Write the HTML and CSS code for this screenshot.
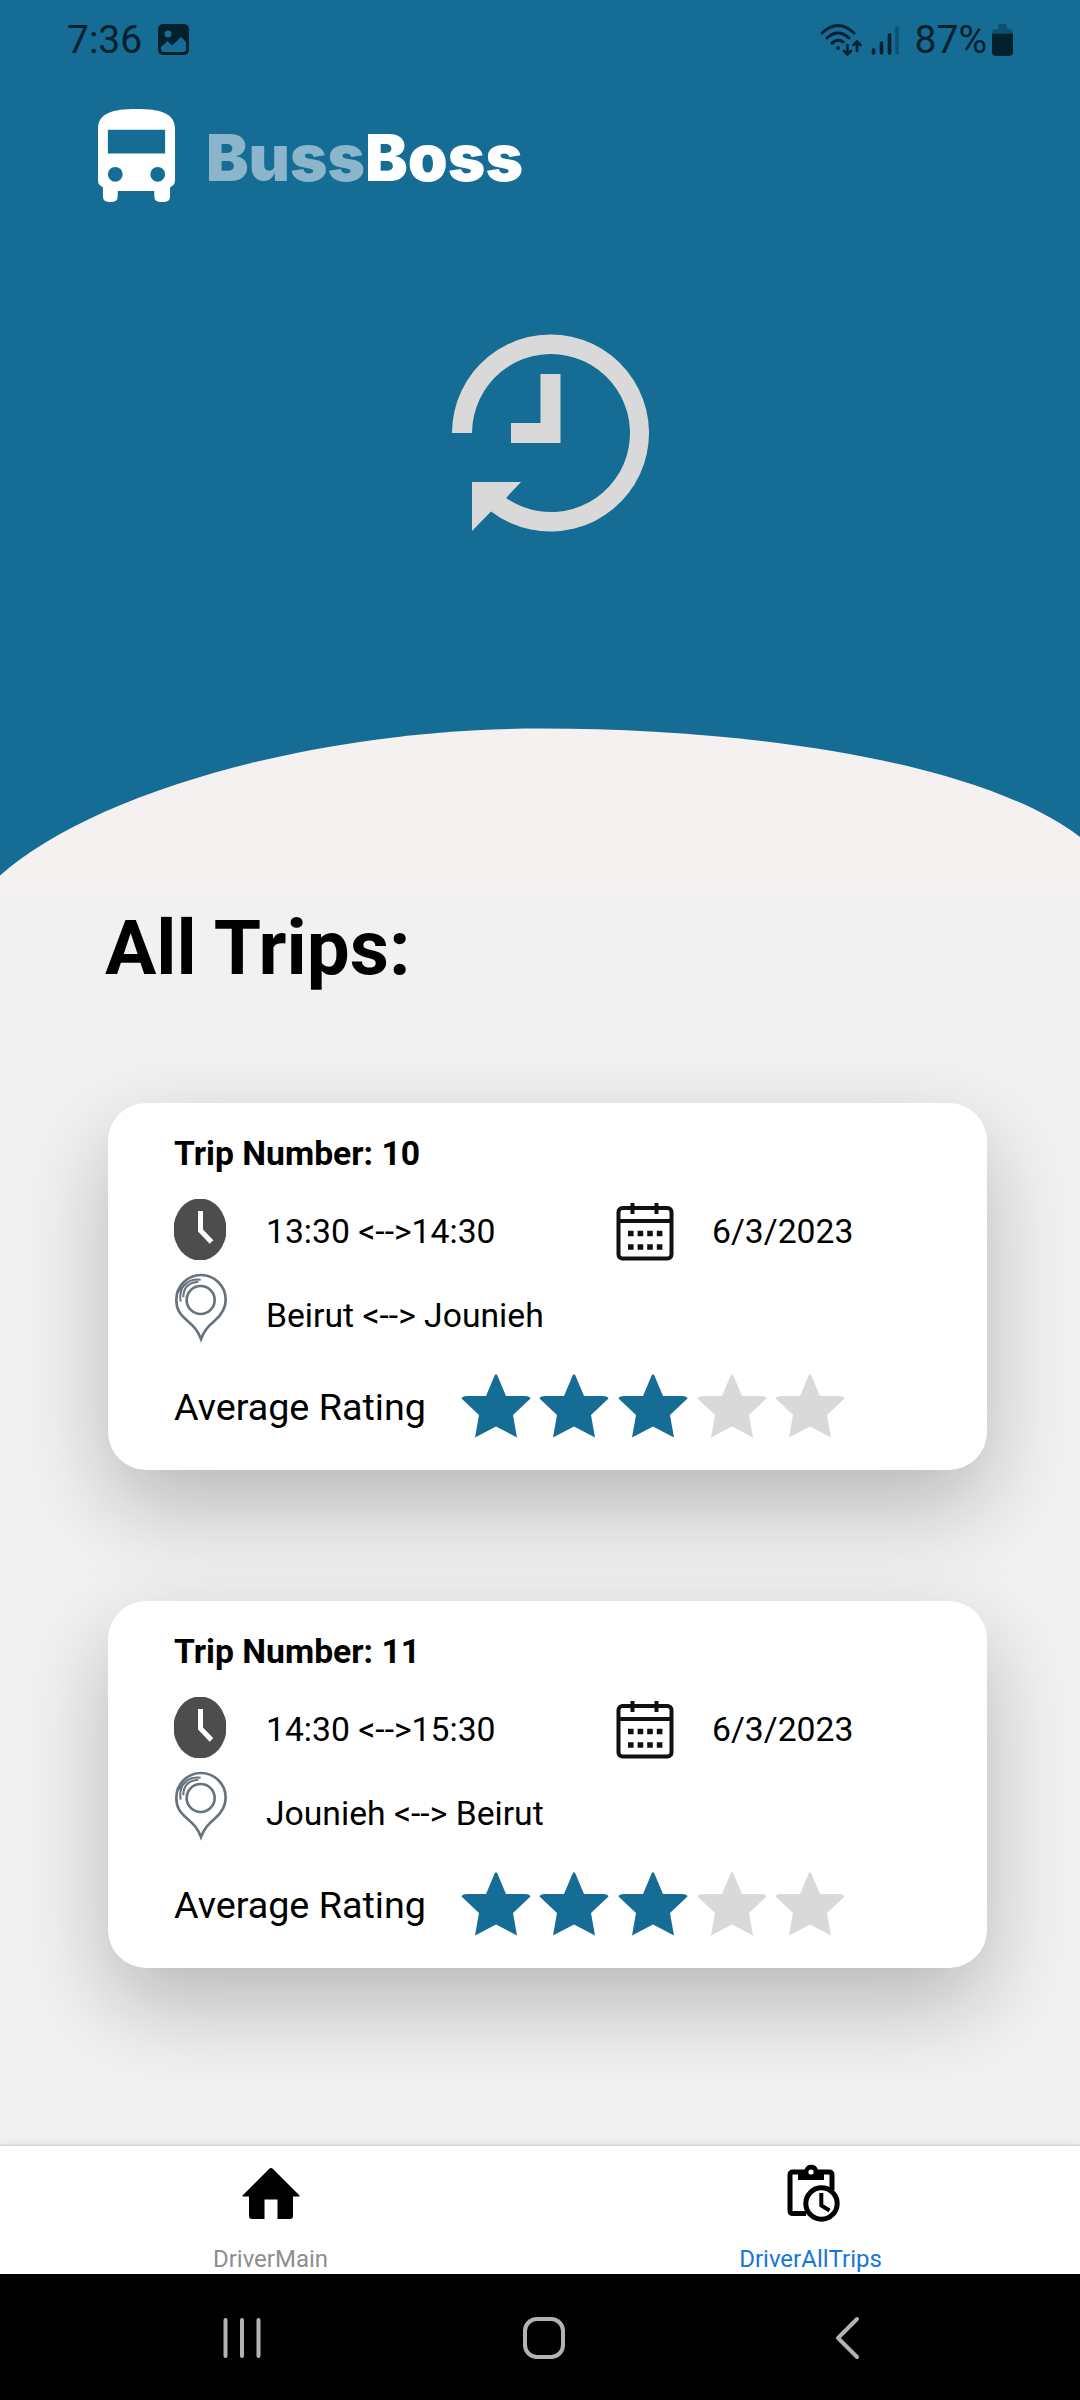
FILE: index.html
```html
<!DOCTYPE html>
<html lang="en">
<head>
<meta charset="utf-8">
<title>BussBoss</title>
<link rel="stylesheet" href="styles.css">
</head>
<body>
<svg class="defs" width="0" height="0">
  <symbol id="clock" viewBox="0 0 52 61">
    <ellipse cx="26" cy="30.500" rx="26.500" ry="31" fill="#4d4d4d"/>
    <path d="M26.500 12V31.500L37.500 43" fill="none" stroke="#fff" stroke-width="5"/>
  </symbol>
  <symbol id="pin" viewBox="246 576 168 216">
    <g fill="none" stroke="#66727e" stroke-width="8">
      <path d="M333 780C323 754 312 742 292 725C268 704 259 690 259 662A74 74 0 0 1 407 662C407 688 396 706 374 725C354 742 343 754 333 780Z"/>
      <circle cx="332" cy="663" r="42"/>
      <path stroke-width="6" d="M272 668C265 625 290 598 332 602M280 655C280 625 296 610 325 608M262 640L290 612"/>
    </g>
  </symbol>
  <symbol id="calendar" viewBox="0 0 60 62">
    <g fill="none" stroke="#111" stroke-width="4">
      <rect x="4.500" y="9" width="53" height="50.500" rx="4"/>
      <path d="M4 22H58M18.500 4V15M42.500 4V15"/>
    </g>
    <path d="M14 34.500H50M14 48H50" stroke="#111" stroke-width="5.600" stroke-dasharray="5.600 4" fill="none"/>
  </symbol>
  <symbol id="star" viewBox="0 0 70 64">
    <path d="M35 0Q36.500 1 37 3L45 22H64Q69 22 69.500 24.500L52 41L56 63.500L35 52.500L14 63.500L18 41L.5 24.500Q1 22 6 22H25L33 3Q33.500 1 35 0Z"/>
  </symbol>
</svg>

<header class="hero">
  <div class="status">
    <div class="status-side">
      <span>7:36</span>
      <svg class="photo" width="32" height="32" viewBox="0 0 32 32">
        <rect width="31" height="31" rx="5" fill="#05202d"/>
        <circle cx="10" cy="10" r="3.500" fill="#156c95"/>
        <path d="M3 23L9.500 17L14 21.500L23 13L28 18V25Q28 28 25 28H6Q3 28 3 25Z" fill="#156c95"/>
      </svg>
    </div>
    <div class="status-side">
      <svg width="42" height="34" viewBox="0 0 42 34" fill="none" stroke="#05202d" stroke-width="3" stroke-linecap="round">
        <path d="M2 10Q18 -5 34 10M7 15Q18 5 29 15M12 20Q18 15 23 19"/>
        <path stroke-width="2.600" d="M27.500 22V31M24 28L27.500 31.500L31 28M37 28V19M33.500 22L37 18.500L40.500 22"/>
        <circle cx="18" cy="25" r="2" fill="#05202d" stroke="none"/>
      </svg>
      <svg class="signal" width="29" height="31" viewBox="0 0 29 31" fill="none" stroke="#05202d" stroke-width="3.600" stroke-linecap="round">
        <path d="M2.500 25V28M10.500 18V28M18.500 10V28"/>
        <path d="M26 3V28" opacity=".35"/>
      </svg>
      <span class="percent">87%</span>
      <svg width="22" height="34" viewBox="0 0 22 34" fill="#05202d">
        <path d="M6 6V3Q6 1 8 1H13Q15 1 15 3V6H17Q21 6 21 10H0Q0 6 4 6Z" opacity=".35"/>
        <path d="M0 10.500H21V29Q21 33 17 33H4Q0 33 0 29Z"/>
      </svg>
    </div>
  </div>
  <div class="brand">
    <svg width="77" height="93" viewBox="0 0 78 94" preserveAspectRatio="none">
      <path fill="#fff" fill-rule="evenodd" d="M0 20C0 4 15 0 39 0S78 4 78 20V72Q78 77 73 79V88Q73 94 67 94H63Q57 94 57 88V83H20V88Q20 94 14 94H11Q5 94 5 88V79Q0 77 0 72ZM10 21V45H68V21ZM17.500 58.500A7.500 7.500 0 1 0 17.500 73.500A7.500 7.500 0 1 0 17.500 58.500ZM60.500 58.500A7.500 7.500 0 1 0 60.500 73.500A7.500 7.500 0 1 0 60.500 58.500Z"/>
    </svg>
    <svg class="wordmark" width="330" height="96" viewBox="0 0 330 96">
      <text x="0" y="72" textLength="159" lengthAdjust="spacingAndGlyphs" fill="#8ab5ca">Buss</text>
      <text x="159" y="72" textLength="158" lengthAdjust="spacingAndGlyphs" fill="#fff">Boss</text>
    </svg>
  </div>
  <svg class="history" width="200" height="200" viewBox="0 0 200 200">
    <path fill="#d9d9d9" d="M1 99A98.500 98.500 0 1 1 40 177.500L21 197V148H70L55 164A79 79 0 1 0 21 99ZM89.500 40H109.500V109H60V89H89.500Z"/>
  </svg>
  <svg class="curve" width="1080" height="164" viewBox="0 728 1080 164">
    <path fill="#f5f1f0" d="M0 875.500C90 795 310 728.500 541 728.500C760 728.500 985 764 1080 837V892H0Z"/>
  </svg>
</header>

<main class="content">
  <h1>All Trips:</h1>
  <section class="card">
    <h2>Trip Number: 10</h2>
    <div class="when">
      <svg class="clock"><use href="#clock"/></svg>
      <span class="hours">13:30 &lt;--&gt;14:30</span>
      <svg class="calendar"><use href="#calendar"/></svg>
      <span>6/3/2023</span>
    </div>
    <div class="route">
      <svg class="pin"><use href="#pin"/></svg>
      <span>Beirut &lt;--&gt; Jounieh</span>
    </div>
    <div class="rating">
      <span class="rating-label">Average Rating</span>
      <svg class="star on"><use href="#star"/></svg>
      <svg class="star on"><use href="#star"/></svg>
      <svg class="star on"><use href="#star"/></svg>
      <svg class="star"><use href="#star"/></svg>
      <svg class="star"><use href="#star"/></svg>
    </div>
  </section>
  <section class="card">
    <h2>Trip Number: 11</h2>
    <div class="when">
      <svg class="clock"><use href="#clock"/></svg>
      <span class="hours">14:30 &lt;--&gt;15:30</span>
      <svg class="calendar"><use href="#calendar"/></svg>
      <span>6/3/2023</span>
    </div>
    <div class="route">
      <svg class="pin"><use href="#pin"/></svg>
      <span>Jounieh &lt;--&gt; Beirut</span>
    </div>
    <div class="rating">
      <span class="rating-label">Average Rating</span>
      <svg class="star on"><use href="#star"/></svg>
      <svg class="star on"><use href="#star"/></svg>
      <svg class="star on"><use href="#star"/></svg>
      <svg class="star"><use href="#star"/></svg>
      <svg class="star"><use href="#star"/></svg>
    </div>
  </section>
</main>

<nav class="tabs">
  <a class="tab">
    <svg width="60" height="62" viewBox="0 0 60 62">
      <path d="M28 7Q30 5 32 7L58.500 33.500V34.500H52V54Q52 57 49 57H36.500V37.500H23.500V57H11Q8 57 8 54V34.500H1.500V33.500Z"/>
    </svg>
    <span>DriverMain</span>
  </a>
  <a class="tab active">
    <svg width="60" height="62" viewBox="0 0 60 62" fill="none" stroke="#000" stroke-width="5">
      <path d="M25 51.500H12Q9 51.500 9 48.500V13Q9 10 12 10H48Q51 10 51 13V28"/>
      <path d="M17 8H23.500A7 7 0 0 1 37 8H43V18H17Z" fill="#000" stroke="none"/>
      <circle cx="30" cy="10" r="2.600" fill="#fff" stroke="none"/>
      <circle cx="40.500" cy="41.500" r="15.700" fill="#fff"/>
      <path stroke-width="4" d="M40.300 31V43.500L48.500 48.500"/>
    </svg>
    <span>DriverAllTrips</span>
  </a>
</nav>

<footer class="system">
  <svg width="40" height="46" viewBox="0 0 40 46"><path d="M3.500 5V41M20 5V41M36.500 5V41"/></svg>
  <svg class="home" width="46" height="46" viewBox="0 0 46 46"><rect x="4" y="4" width="38" height="38" rx="12"/></svg>
  <svg width="26" height="46" viewBox="0 0 26 46"><path d="M23 4L4 23L23 42"/></svg>
</footer>
</body>
</html>
```
FILE: styles.css
```css
* { box-sizing: border-box; }
body {
  margin: 0;
  width: 1080px;
  height: 2400px;
  display: flex;
  flex-direction: column;
  overflow: hidden;
  background: #f1f1f1;
  color: #000;
  font-family: Roboto, sans-serif;
}
svg { display: block; flex: none; }
.defs { position: absolute; }

.hero {
  height: 892px;
  flex: none;
  display: flex;
  flex-direction: column;
  background: #156c95;
}
.status {
  height: 80px;
  padding: 0 66px 0 67px;
  display: flex;
  justify-content: space-between;
  color: #05202d;
  font-size: 39px;
  line-height: 80px;
}
.status-side { display: flex; align-items: center; }
.photo { margin-left: 16px; }
.signal { margin-left: 9px; }
.percent { margin: 0 5px 0 15px; }

.brand {
  height: 94px;
  margin-top: 29px;
  padding-left: 98px;
  display: flex;
}
.wordmark {
  margin-left: 31px;
  font-family: Inter, sans-serif;
  font-size: 65px;
  font-weight: 900;
}
.history { margin: 131px 0 0 450.5px; }
.curve { margin-top: auto; }

.content {
  height: 1254px;
  flex: none;
  overflow: hidden;
}
h1 {
  margin: 11px 0 110px 105px;
  font-size: 76.4px;
  line-height: 90px;
  font-weight: 700;
}
.card {
  width: 879px;
  height: 367px;
  margin: 0 0 131px 108px;
  padding: 31px 66px 0;
  border-radius: 38px;
  background: #fff;
  box-shadow: 0 36px 88px rgba(0, 0, 0, .24);
  font-size: 33.7px;
}
h2 { margin: 0; font-size: 33.7px; line-height: 40px; }
.when {
  height: 62px;
  margin-top: 25px;
  display: flex;
  align-items: flex-start;
  line-height: 65px;
}
.clock { width: 52px; height: 61px; margin-right: 40px; }
.hours { width: 348px; }
.calendar { width: 60px; height: 62px; margin-right: 38px; }
.route {
  height: 68px;
  margin-top: 13px;
  display: flex;
  align-items: flex-start;
}
.pin { width: 56px; height: 72px; margin: -3px 38px 0 -2px; }
.route span { padding-top: 22px; line-height: 40px; }
.rating {
  height: 64px;
  margin-top: 32px;
  display: flex;
  align-items: center;
  gap: 8.7px;
}
.rating-label { width: 278px; padding-top: 2px; font-size: 37.7px; }
.star { width: 70px; height: 64px; fill: #d9d9d9; }
.star.on { fill: #156c95; }

.tabs {
  height: 128px;
  flex: none;
  display: flex;
  background: #fff;
  box-shadow: 0 0 14px rgba(0, 0, 0, .08), 0 -1px 2px rgba(0, 0, 0, .12);
}
.tab {
  flex: 1;
  padding: 16px 0 0 1px;
  display: flex;
  flex-direction: column;
  align-items: center;
  color: #8e8e8f;
  font-size: 24px;
}
.tab span { margin-top: 20px; line-height: 30px; }
.tab.active { color: #1676dc; }

.system {
  height: 126px;
  flex: none;
  padding: 2px 220px 0 222px;
  display: flex;
  justify-content: space-between;
  align-items: center;
  background: #000;
  fill: none;
  stroke: #b3b3b3;
  stroke-width: 4;
  stroke-linecap: round;
  stroke-linejoin: round;
}
.home { margin-right: 8px; }
```
